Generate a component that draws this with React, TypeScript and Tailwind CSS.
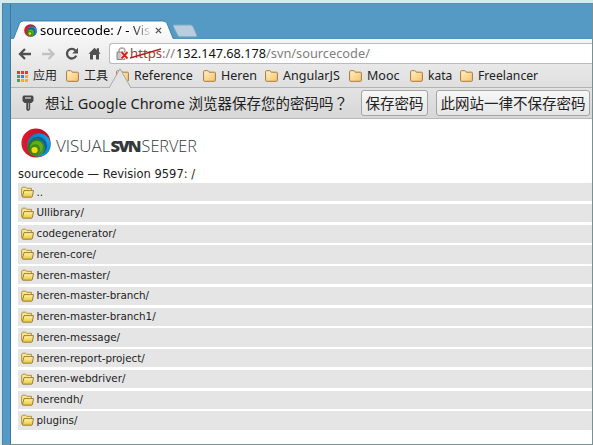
import React from "react";

const ui = "font-['Noto_Sans','Noto_Sans_CJK_SC',sans-serif]";

const files = [
  "..", "UIlibrary/", "codegenerator/", "heren-core/", "heren-master/", "heren-master-branch/",
  "heren-master-branch1/", "heren-message/", "heren-report-project/", "heren-webdriver/", "herendh/", "plugins/",
];

const bookmarks = [
  { label: "工具", box: "w-[50px]", text: "text-[12px]" },
  { label: "Reference", box: "w-[87px]", text: "text-[12.5px]" },
  { label: "Heren", box: "w-[62px]", text: "text-[12.5px]" },
  { label: "AngularJS", box: "w-[84px]", text: "text-[12.5px]" },
  { label: "Mooc", box: "w-[61px]", text: "text-[12.5px]" },
  { label: "kata", box: "w-[50px]", text: "text-[12px]" },
  { label: "Freelancer", box: "w-[90px]", text: "text-[12.2px]" },
];

function Swirl({ className }: { className: string }) {
  return (
    <svg viewBox="0 0 30 30" className={className}>
      <defs>
        <linearGradient id="swirl-red" x1="0" y1="0" x2="1" y2="0">
          <stop offset="0" stopColor="#e0182f" />
          <stop offset="1" stopColor="#b80f26" />
        </linearGradient>
        <linearGradient id="swirl-blue" x1="0" y1="0" x2="1" y2="1">
          <stop offset="0" stopColor="#0a74b4" />
          <stop offset=".6" stopColor="#18a3e0" />
          <stop offset="1" stopColor="#0b7dc0" />
        </linearGradient>
        <linearGradient id="swirl-green" x1="0" y1="0" x2="1" y2="1">
          <stop offset="0" stopColor="#1d6a2c" />
          <stop offset="1" stopColor="#4c9c26" />
        </linearGradient>
      </defs>
      <circle cx="15" cy="15" r="14.6" fill="url(#swirl-red)" />
      <circle cx="18" cy="17" r="11.7" fill="url(#swirl-blue)" />
      <circle cx="17" cy="17.8" r="9.2" fill="#0b639f" />
      <circle cx="15" cy="19.6" r="8.8" fill="url(#swirl-green)" />
      <circle cx="15.6" cy="19" r="6.2" fill="#64ad1f" />
      <circle cx="14.2" cy="21.2" r="5" fill="#3f8a16" />
      <circle cx="13.6" cy="22" r="3.1" fill="#efdc0c" />
    </svg>
  );
}

function BookmarkFolder() {
  return (
    <svg viewBox="0 0 13 12" className="h-3 w-[13px] shrink-0">
      <defs>
        <linearGradient id="bf" x1="0" y1="0" x2="1" y2="1">
          <stop offset="0" stopColor="#fff0c4" />
          <stop offset="1" stopColor="#f6c46d" />
        </linearGradient>
      </defs>
      <path d="M.6 10.4V1.6Q.6.7 1.5.7H4.8Q5.5.7 5.8 1.4L6.2 2.2H11.5Q12.4 2.2 12.4 3.1V10.4Q12.4 11.3 11.5 11.3H1.5Q.6 11.3.6 10.4Z" fill="url(#bf)" stroke="#a9793f" strokeWidth="1" />
    </svg>
  );
}

function FileFolder() {
  return (
    <svg viewBox="0 0 13 12" className="h-3 w-[13px] shrink-0">
      <defs>
        <linearGradient id="ff" x1="0" y1="0" x2="0" y2="1">
          <stop offset="0" stopColor="#fff3a6" />
          <stop offset="1" stopColor="#e9c53c" />
        </linearGradient>
      </defs>
      <path d="M1.3 10.5.6 9V2.2L1.5 1.2H4.6L5.8 2.3H10.5V4.5" fill="#f8e58a" stroke="#ab8a35" strokeWidth=".9" />
      <path d="M1.4 10.6 3 4.6H12.5L11.4 10.3Q11.2 11.2 10.3 11.2H2Q1.3 11.2 1.4 10.6Z" fill="url(#ff)" stroke="#92732a" strokeWidth=".9" />
    </svg>
  );
}

function Tabs() {
  return (
    <div className="grid h-[36px] w-full">
      <svg viewBox="0 0 581 36" className="[grid-area:1/1] h-9 w-[581px]">
        <defs>
          <linearGradient id="tab" x1="0" y1="0" x2="0" y2="1">
            <stop offset="0" stopColor="#ffffff" />
            <stop offset="1" stopColor="#f5f5f5" />
          </linearGradient>
        </defs>
        <path d="M0 35.3H581" stroke="#397ca4" />
        <path d="M0 36.5C2 36 3 34 4 31L8.5 19.5Q9.5 17 12.5 17H152Q155 17 156 19.5L161.5 33Q162.4 35.5 164 36.5Z" fill="url(#tab)" stroke="#3d7ba2" strokeWidth=".9" />
        <path d="M163.5 21H179.5Q181.5 21 182.2 23L185.7 31Q186.4 32.8 184.6 32.8H169Q167.3 32.8 166.6 31L162.4 22.6Q161.8 21 163.5 21Z" fill="#bacddd" stroke="#7aabc9" />
      </svg>
      <div className={`[grid-area:1/1] relative flex items-center pl-[13px] pt-[16px] h-9 ${ui}`}>
        <Swirl className="h-[13px] w-[13px] shrink-0" />
        <span className="ml-[3px] w-[110px] whitespace-nowrap bg-gradient-to-r from-black from-82% to-black/10 bg-clip-text text-[13px] leading-[18px] text-transparent">sourcecode: / - Vis</span>
        <svg viewBox="0 0 8 8" className="ml-[5px] h-[7px] w-[7px]"><path d="M1 1 7 7M7 1 1 7" stroke="#555" strokeWidth="1.6" /></svg>
      </div>
    </div>
  );
}

function Toolbar() {
  return (
    <div className="flex h-[26px] shrink-0 bg-gradient-to-b from-[#f5f5f5] to-[#e8e8e8] pt-1">
      <svg viewBox="0 0 98 22" className="h-[22px] w-[98px] shrink-0" fill="none" stroke="#505050" strokeWidth="2.3">
        <path d="M20 11H9M14 6 9 11 14 16" />
        <path d="M31 11H42M37.5 6 42.5 11 37.5 16" stroke="#c2c2c2" />
        <path d="M64.4 7.5A4.8 4.8 0 1 0 65.2 12.6" />
        <path d="M67 4.8V10.4H61.2Z" fill="#505050" stroke="none" />
        <path d="M77.5 10.8 83.5 4.8 85.8 7V5.2H88V9L89.7 10.8H88V16.5H85V12H82V16.5H79V10.8Z" fill="#505050" stroke="none" />
      </svg>
      <div className={`flex h-[21px] min-w-0 flex-1 items-center rounded-l-[3px] border border-r-0 border-[#bbbbbb] bg-white pl-[6px] leading-5 whitespace-nowrap ${ui}`}>
        <svg viewBox="0 0 14 14" className="h-[14px] w-[14px] shrink-0">
          <path d="M3 6V4Q3 1 6 1T9 4V6" fill="none" stroke="#aaa" strokeWidth="1.6" />
          <path d="M1 5H9V12.5H1Z" fill="#bbb" stroke="#888" />
          <path d="M2 7H8M2 9H8M2 11H8" stroke="#ddd" strokeWidth=".7" />
          <path d="M5.5 5 11.5 11.5M11.5 5 5.5 11.5" stroke="#fff" strokeWidth="3.4" />
          <path d="M5.5 5 11.5 11.5M11.5 5 5.5 11.5" stroke="#dc211c" strokeWidth="1.9" />
        </svg>
        <span className="grid h-5 w-[32px] shrink-0 text-[#a63a3a]">
          <span className="[grid-area:1/1] text-[13.2px] leading-[19px]">https</span>
          <svg viewBox="0 0 31 20" className="[grid-area:1/1] h-5 w-[31px]"><path d="M0 14 31 5" stroke="#b3201f" strokeWidth="1.6" /></svg>
        </span>
        <span className="flex text-[12.8px] leading-[19px] text-[#808080]">
          <span className="w-[14px]">://</span>
          <span className="w-[90px] text-[12.7px] text-[#111]">132.147.68.178</span>
          <span>/svn/sourcecode/</span>
        </span>
      </div>
    </div>
  );
}

function Bookmarks() {
  const colors = ["#e33b32", "#e33b32", "#e33b32", "#43a35c", "#2d85ee", "#f4ae1e", "#43a35c", "#f4ae1e", "#f4ae1e"];
  return (
    <div className={`flex h-[23px] shrink-0 items-center border-b border-[#b3b3b3] bg-gradient-to-b from-[#e8e8e8] to-[#dfdfdf] pl-[6px] text-[#222] whitespace-nowrap ${ui}`}>
      <div className="grid grid-cols-3 gap-[1px]">
        {colors.map((c, i) => <i key={i} className="h-[3px] w-[3px]" style={{ backgroundColor: c }} />)}
      </div>
      <span className="ml-[5px] w-[33px] text-[12px] leading-5">应用</span>
      {bookmarks.map((b) => (
        <div key={b.label} className={`flex shrink-0 items-center ${b.box}`}>
          <BookmarkFolder />
          <span className={`ml-[5px] leading-5 ${b.text}`}>{b.label}</span>
        </div>
      ))}
    </div>
  );
}

function PasswordBar() {
  return (
    <div className={`relative flex h-[31px] shrink-0 items-center border-b border-[#b8b8b8] bg-gradient-to-b from-[#e3e3e3] to-[#d7d7d7] text-[15px] text-[#222] whitespace-nowrap ${ui}`}>
      <svg viewBox="0 0 24 20" className="absolute left-[97px] top-[-20px] h-5 w-6">
        <path d="M1 20 12 .8 23 20" fill="#e3e3e3" stroke="#aaa" />
      </svg>
      <svg viewBox="0 0 12 16" className="ml-[11px] h-4 w-3 shrink-0">
        <path d="M1.5.5H10.5L11.5 2V6L9.5 8H8.2V14L7 15.7H5.3L4.3 14.6V8H2.5L.5 6V2Z" fill="#484848" />
        <path d="M3 3H9" stroke="#d5d5d5" strokeWidth="1.3" />
        <path d="M6.6 8V14" stroke="#aaa" />
      </svg>
      <span className="ml-[11px] w-[316px] shrink-0 text-[14.5px]">想让 Google Chrome 浏览器保存您的密码吗<span className="font-['Noto_Sans_CJK_TC',sans-serif]" lang="zh-TW">？</span></span>
      <button className="h-[26px] w-[67px] shrink-0 rounded-[3px] border border-[#a5a5a5] bg-gradient-to-b from-[#f7f7f7] to-[#e6e6e6] text-[14.5px] leading-5">保存密码</button>
      <button className="ml-2 h-[26px] w-[154px] shrink-0 rounded-[3px] border border-[#a5a5a5] bg-gradient-to-b from-[#f7f7f7] to-[#e6e6e6] text-[14.5px] leading-5">此网站一律不保存密码</button>
    </div>
  );
}

export default function App() {
  return (
    <div className="h-[445px] w-[593px] overflow-hidden bg-[#d5eaec] pl-[2px] pt-[3px]">
      <div className="flex h-[442px] w-[591px] flex-col border-r border-b border-t border-r-[#799192] border-b-[#799192] border-t-[#5b91aa] bg-[#549ac5] border-l border-l-[#4f7eac] pl-[7px]">
        <div className="flex min-h-0 flex-1 flex-col border-l border-[#3f7795]">
          <div className="-mb-px shrink-0"><Tabs /></div>
          <Toolbar />
          <Bookmarks />
          <PasswordBar />
          <main className="min-h-0 flex-1 bg-white pl-[7px] font-['DejaVu_Sans',sans-serif]">
            <header className="flex h-[48px] items-center">
              <Swirl className="ml-[2.5px] h-[30px] w-[30px] shrink-0" />
              <span className="ml-[5.5px] mt-1.5 font-['Open_Sans',sans-serif] text-[17px] font-light leading-6 text-[#34383b]">VISUAL<span className="font-extrabold text-[16.5px] tracking-[-1.9px]">SVN</span><span className="ml-[2px] text-[16.2px]">SERVER</span></span>
            </header>
            <h1 className="h-4 text-[11.5px] leading-[15px] text-[#222]">sourcecode — Revision 9597: /</h1>
            <ul className="flex flex-col gap-[2.5px]">
              {files.map((f) => (
                <li key={f} className="flex h-[18.25px] shrink-0 items-center bg-[#e5e5e5] pl-[2.5px] text-[10.35px] text-[#222]">
                  <FileFolder />
                  <span className="-mt-px ml-[3px] leading-4">{f}</span>
                </li>
              ))}
            </ul>
          </main>
        </div>
      </div>
    </div>
  );
}
